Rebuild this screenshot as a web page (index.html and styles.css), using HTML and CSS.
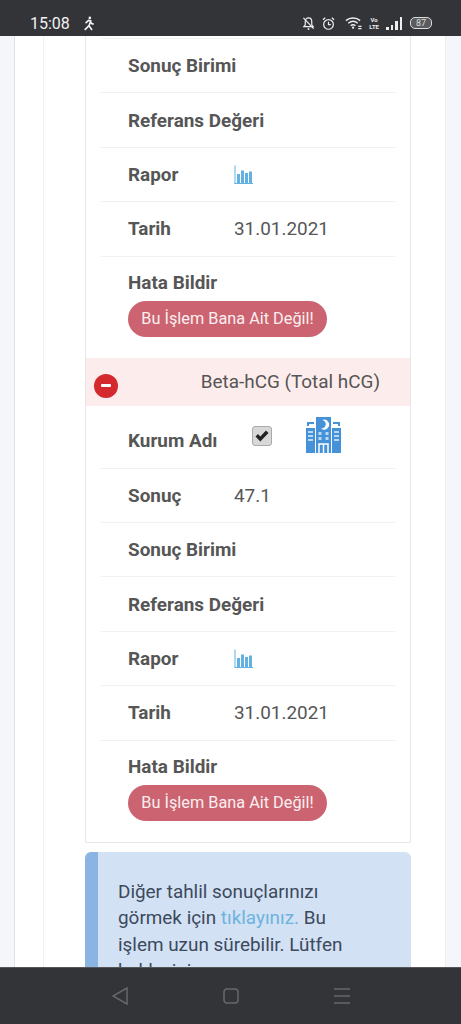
FILE: index.html
```html
<!DOCTYPE html>
<html lang="tr">
<head>
    <meta charset="UTF-8">
    <meta name="viewport" content="width=device-width, initial-scale=1.0">
    <title>Tahlil Sonuçları</title>
    <link rel="stylesheet" href="styles.css">
</head>
<body>
    <div class="phone">
        <div class="status-bar">
            <span class="clock">15:08</span>
            <svg class="walk" width="12" height="17" viewBox="0 0 14 17" fill="none" stroke="#f2f2f2" stroke-width="1.9">
                <circle cx="8" cy="2" r="1.6" fill="#f2f2f2" stroke="none"/>
                <path d="M3 8 L6.5 5 L9 5.5 L7 11 L10.5 16 M7 11 L5 13 L2 16 M8.5 6 L10 8.5 L12.5 9.5"/>
            </svg>
            <div class="status-icons">
                <svg width="13" height="16" viewBox="0 0 14 16" fill="none" stroke="#eee" stroke-width="1.3">
                    <path d="M2 12 L3.5 10 V6.5 C3.5 4 5 2.5 7 2.5 C9 2.5 10.5 4 10.5 6.5 V10 L12 12 Z"/>
                    <path d="M1.5 2.5 L12.5 14"/>
                    <circle cx="7" cy="14.5" r="1" fill="#eee" stroke="none"/>
                </svg>
                <svg width="13" height="15" viewBox="0 0 14 15" fill="none" stroke="#eee" stroke-width="1.3">
                    <circle cx="7" cy="8.5" r="5.2"/>
                    <path d="M7 5.5 V8.8 H9.5 M1 3.5 L3.5 1.3 M13 3.5 L10.5 1.3"/>
                </svg>
                <svg class="wifi" width="17" height="14" viewBox="0 0 18 14" fill="none" stroke="#eee" stroke-width="1.5">
                    <path d="M1 4.5 C5 .8 12 .8 16 4.5 M3.5 7.2 C6.5 4.6 10.5 4.6 13.5 7.2 M6 10 C7.5 8.6 9.5 8.6 11 10"/>
                    <circle cx="8.5" cy="12" r="1.2" fill="#eee" stroke="none"/>
                    <path d="M14 10.5 H17.5 M14 13 H17.5" stroke-width="1.3"/>
                </svg>
                <span class="volte">Vo<br>LTE</span>
                <div class="signal">
                    <i class="bar-1"></i><i class="bar-2"></i><i class="bar-3"></i><i class="bar-4"></i>
                </div>
                <span class="battery">87</span>
            </div>
        </div>

        <div class="page">
            <div class="wrapper">
                <div class="card">
                    <div class="group first-group">
                        <div class="row"><span class="label">Sonuç Birimi</span></div>
                        <div class="row"><span class="label">Referans Değeri</span></div>
                        <div class="row">
                            <span class="label">Rapor</span>
                            <svg class="chart" width="20" height="20" viewBox="0 0 20 20" fill="#62b1e2">
                                <rect x="0.5" y="0.5" width="1" height="18"/>
                                <rect x="3" y="9" width="3" height="9"/>
                                <rect x="7" y="5.5" width="3" height="12.5"/>
                                <rect x="11" y="8" width="3" height="10"/>
                                <rect x="15" y="6.5" width="3" height="11.5"/>
                                <rect x="0.5" y="18" width="18.5" height="1"/>
                            </svg>
                        </div>
                        <div class="row"><span class="label">Tarih</span><span class="value">31.01.2021</span></div>
                        <div class="report-row">
                            <span class="label">Hata Bildir</span>
                            <button class="report-button">Bu İşlem Bana Ait Değil!</button>
                        </div>
                    </div>

                    <div class="test-header">
                        <span class="minus"></span>
                        <span class="test-name">Beta-hCG (Total hCG)</span>
                    </div>

                    <div class="group">
                        <div class="row institution-row">
                            <span class="label">Kurum Adı</span>
                            <span class="checkbox">
                                <svg width="14" height="12" viewBox="0 0 14 12" fill="#222"><path d="M0.5 6.5 L3 4 L5.3 6.6 L11 0.5 L13.5 3 L5.3 11.5 Z"/></svg>
                            </span>
                            <svg class="hospital" width="35" height="36" viewBox="0 0 35 36">
                                <rect x="10" y="0" width="15" height="36" fill="#4692d8"/>
                                <rect x="0" y="11" width="9" height="25" fill="#4692d8"/>
                                <rect x="26" y="11" width="9" height="25" fill="#4692d8"/>
                                <path d="M2 9 V6 H8 M33 9 V6 H27" fill="none" stroke="#4692d8" stroke-width="2"/>
                                <path d="M16 3 A5 5 0 1 1 15 11.5 A4.2 4.2 0 0 0 16 3 Z" fill="#fff"/>
                                <g fill="#b9d8f2">
                                    <rect x="12.5" y="15" width="3" height="3"/><rect x="19.5" y="15" width="3" height="3"/>
                                    <rect x="12.5" y="20" width="3" height="3"/><rect x="19.5" y="20" width="3" height="3"/>
                                    <rect x="2" y="14" width="5" height="2"/><rect x="2" y="18" width="5" height="2"/><rect x="2" y="22" width="5" height="2"/>
                                    <rect x="28" y="14" width="5" height="2"/><rect x="28" y="18" width="5" height="2"/><rect x="28" y="22" width="5" height="2"/>
                                </g>
                                <path d="M13 36 V27 H22 V36 M17.5 27 V36" fill="none" stroke="#fff" stroke-width="1.5"/>
                            </svg>
                        </div>
                        <div class="row"><span class="label">Sonuç</span><span class="value">47.1</span></div>
                        <div class="row"><span class="label">Sonuç Birimi</span></div>
                        <div class="row"><span class="label">Referans Değeri</span></div>
                        <div class="row">
                            <span class="label">Rapor</span>
                            <svg class="chart" width="20" height="20" viewBox="0 0 20 20" fill="#62b1e2">
                                <rect x="0.5" y="0.5" width="1" height="18"/>
                                <rect x="3" y="9" width="3" height="9"/>
                                <rect x="7" y="5.5" width="3" height="12.5"/>
                                <rect x="11" y="8" width="3" height="10"/>
                                <rect x="15" y="6.5" width="3" height="11.5"/>
                                <rect x="0.5" y="18" width="18.5" height="1"/>
                            </svg>
                        </div>
                        <div class="row"><span class="label">Tarih</span><span class="value">31.01.2021</span></div>
                        <div class="report-row">
                            <span class="label">Hata Bildir</span>
                            <button class="report-button">Bu İşlem Bana Ait Değil!</button>
                        </div>
                    </div>
                </div>

                <div class="callout">
                    Diğer tahlil sonuçlarınızı görmek için <a class="callout-link" href="#">tıklayınız.</a> Bu işlem uzun sürebilir. Lütfen bekleyiniz.
                </div>
            </div>
        </div>

        <div class="nav-bar">
            <svg width="16" height="18" viewBox="0 0 16 18" fill="none" stroke="#66686b" stroke-width="1.5"><path d="M15 1 V17 L1 9 Z"/></svg>
            <svg width="16" height="16" viewBox="0 0 16 16" fill="none" stroke="#66686b" stroke-width="1.5"><rect x="1" y="1" width="14" height="14" rx="3"/></svg>
            <svg width="16" height="16" viewBox="0 0 16 16" fill="none" stroke="#66686b" stroke-width="1.5"><path d="M0 1 H16 M0 8 H16 M0 15 H16"/></svg>
        </div>
    </div>
</body>
</html>
```

FILE: styles.css
```css
html,
body {
    margin: 0;
    padding: 0;
}

body {
    font-family: 'Roboto', 'Liberation Sans', sans-serif;
    color: #555;
}

.phone {
    width: 461px;
    height: 1024px;
    display: flex;
    flex-direction: column;
    overflow: hidden;
    background-color: #f4f6f9;
}

/* status bar */
.status-bar {
    height: 36px;
    flex: none;
    box-sizing: border-box;
    background-color: #333438;
    display: flex;
    align-items: center;
    padding: 10px 29px 0 30px;
    color: #f2f2f2;
}

.clock {
    font-size: 16px;
}

.walk {
    margin-left: 13px;
}

.status-icons {
    margin-left: auto;
    display: flex;
    align-items: center;
    gap: 7px;
}

.wifi {
    margin-left: 3px;
}

.volte {
    font-size: 6px;
    line-height: 7px;
    font-weight: 700;
    text-align: center;
    color: #eee;
}

.signal {
    display: flex;
    align-items: flex-end;
    gap: 2px;
    height: 13px;
}

.signal i {
    display: block;
    width: 2.5px;
    background-color: #eee;
}

.bar-1 { height: 3px; }
.bar-2 { height: 5px; }
.bar-3 { height: 9px; }
.bar-4 { height: 13px; }

.battery {
    width: 20px;
    height: 10px;
    margin-left: 1px;
    border: 1px solid #ddd;
    border-radius: 5px;
    background-color: #5a5b5f;
    color: #ddd;
    font-size: 9px;
    line-height: 10px;
    text-align: center;
}

/* page */
.page {
    flex: 1;
    min-height: 0;
    overflow: hidden;
    margin: 0 15px 0 14px;
    padding: 0 34px 0 28px;
    background-color: #fff;
    border-left: 1px solid #dfe1e4;
    border-right: 1px solid #eceef0;
}

.wrapper {
    border-left: 1px solid #f0f1f3;
    padding-left: 41px;
}

.card {
    background-color: #fff;
    border: 1px solid #e6e7e9;
    border-top: none;
}

.group {
    padding: 0 15px;
}

.first-group {
    padding-top: 2px;
}

.row {
    height: 54.4px;
    box-sizing: border-box;
    border-top: 1px solid #f1f1f2;
    display: flex;
    align-items: center;
    padding-left: 27px;
}

.label {
    width: 106px;
    flex: none;
    font-size: 18.9px;
    font-weight: 700;
    color: #565656;
    white-space: nowrap;
}

.value {
    font-size: 18.9px;
    color: #565656;
}

.report-row {
    border-top: 1px solid #f1f1f2;
    padding: 15px 0 21px 27px;
    display: flex;
    flex-direction: column;
    align-items: flex-start;
    gap: 8px;
}

.report-row .label {
    line-height: 21px;
}

.report-button {
    width: 199px;
    height: 36px;
    padding: 0;
    border: none;
    border-radius: 18px;
    background-color: #cb6470;
    color: #fbeef0;
    font-family: inherit;
    font-size: 16.3px;
}

.test-header {
    height: 48px;
    background-color: #fdecec;
    display: flex;
    align-items: center;
    padding: 0 30px 0 8px;
    font-size: 18.9px;
}

.minus {
    width: 24px;
    height: 24px;
    margin-top: 8px;
    border-radius: 50%;
    background-color: #d42a2e;
    display: flex;
    align-items: center;
    justify-content: center;
}

.minus::before {
    content: "";
    width: 10px;
    height: 3px;
    border-radius: 1px;
    background-color: #fff;
}

.test-name {
    margin-left: auto;
}

.group .institution-row {
    height: 62px;
    margin-right: 4px;
    border-top: none;
}

.institution-row .label {
    margin-top: 8px;
}

.checkbox {
    width: 18px;
    height: 18px;
    margin-left: 18px;
    margin-top: -1px;
    border: 1px solid #aaa;
    border-radius: 3px;
    background-color: #d8d8d8;
    display: flex;
    align-items: center;
    justify-content: center;
}

.hospital {
    margin-left: 34px;
    margin-top: -4px;
}

.chart {
    margin-top: 1px;
}

/* info box */
.callout {
    margin-top: 9px;
    padding: 27px 45px 0 20px;
    min-height: 140px;
    background-color: #d3e1f5;
    border-left: 13px solid #8ab4e2;
    border-radius: 6px;
    font-size: 18.9px;
    line-height: 26.5px;
    color: #3c4a5c;
}

.callout-link {
    color: #6cb4dc;
    text-decoration: none;
}

/* nav bar */
.nav-bar {
    height: 57px;
    flex: none;
    box-sizing: border-box;
    background-color: #333438;
    border-top: 1px solid #55565a;
    display: flex;
    align-items: center;
    justify-content: center;
    gap: 95px;
    padding-bottom: 1px;
}
```
